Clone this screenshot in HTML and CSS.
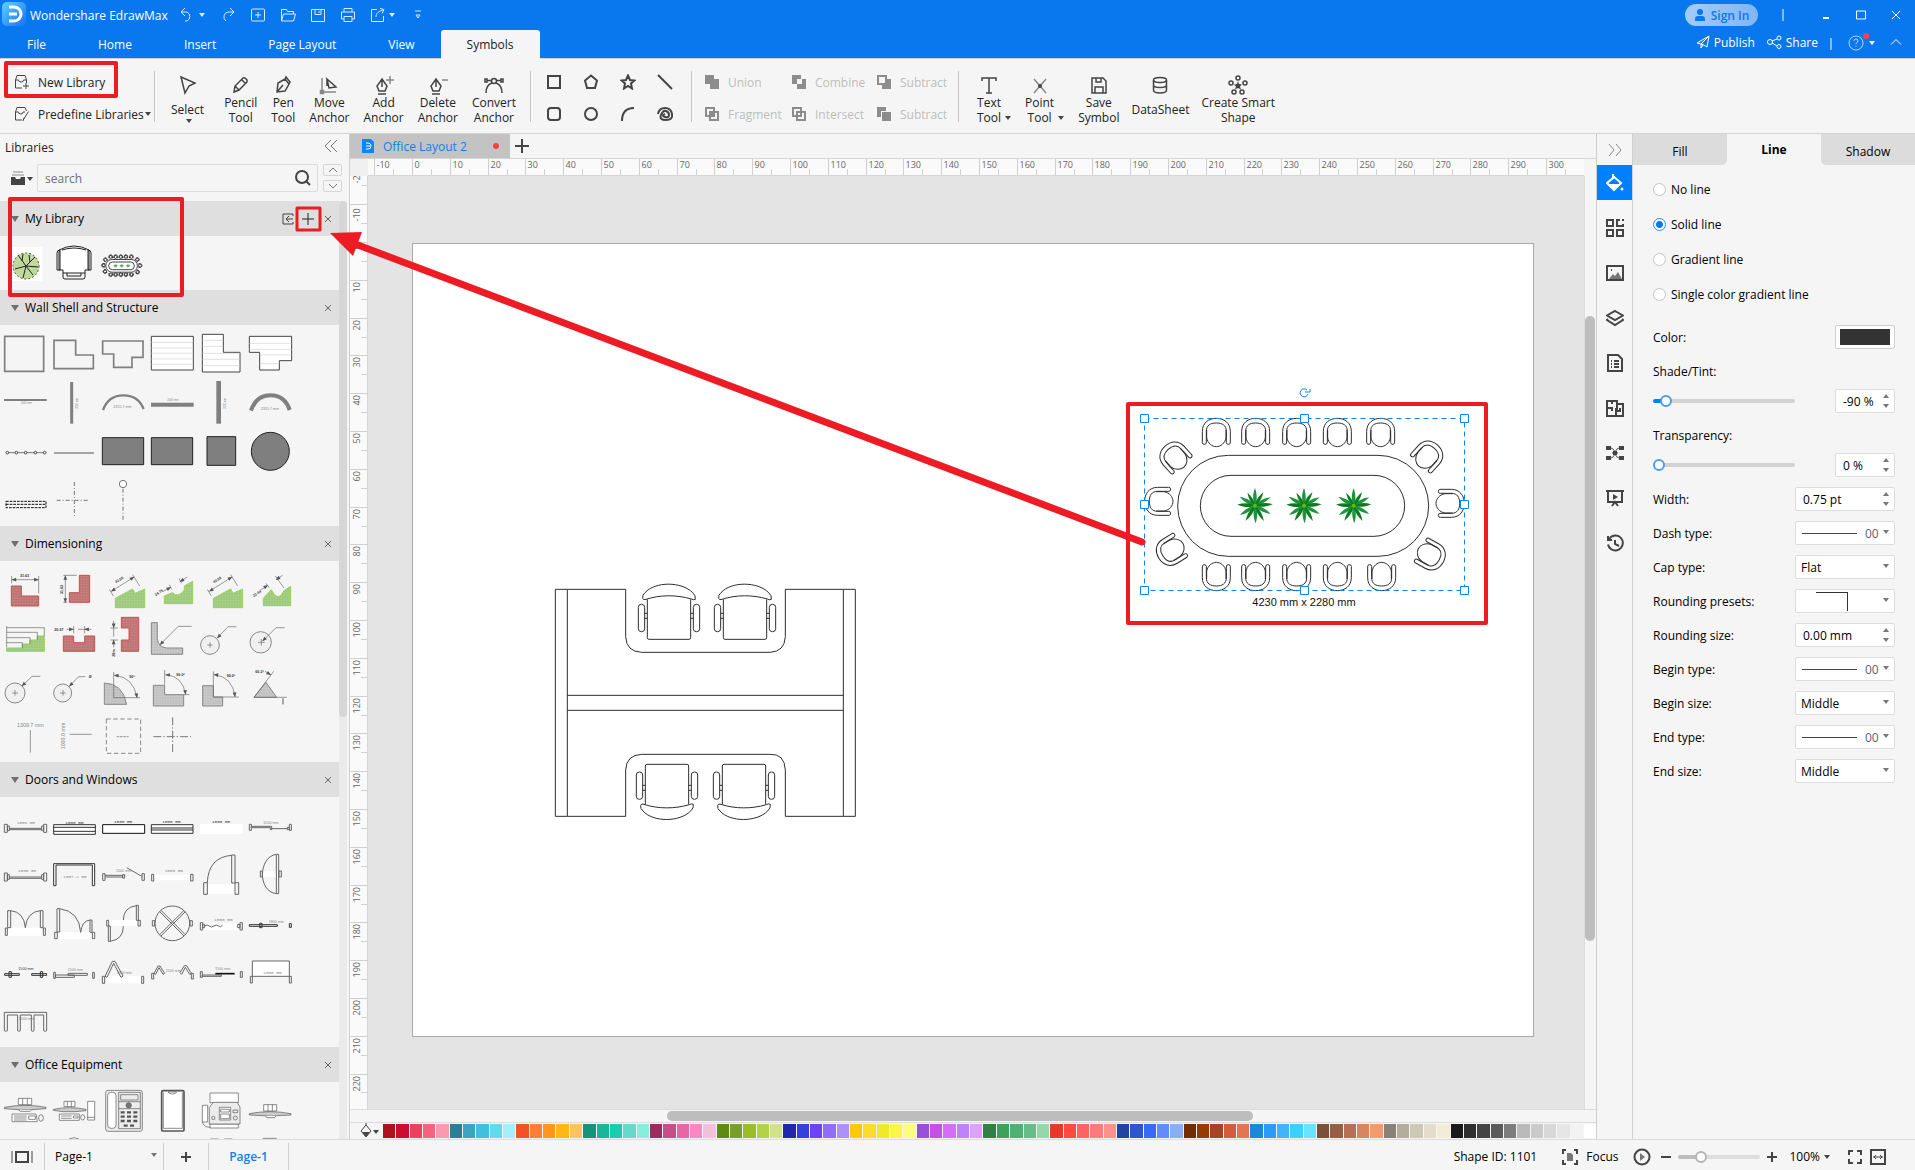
FILE: index.html
```html
<!DOCTYPE html>
<html lang="en">
<head>
  <meta charset="UTF-8" />
  <meta name="viewport" content="width=device-width, initial-scale=1.0"/>
  <title>Wondershare EdrawMax</title>
  <link rel="stylesheet" href="styles.css">
</head>
<body>
  <!-- shared shapes -->
  <svg class="defs" width="0" height="0">
    <defs>
      <pattern id="red" width="8" height="8" patternUnits="userSpaceOnUse"><rect width="8" height="8" fill="#e29595"/><path d="M0 0L8 8M8 0L0 8" stroke="#c96464" stroke-width="1.5"/></pattern>
      <pattern id="green" width="8" height="8" patternUnits="userSpaceOnUse"><rect width="8" height="8" fill="#bfe99b"/><path d="M0 0L8 8M8 0L0 8" stroke="#a0dc70" stroke-width="1.5"/></pattern>
      <pattern id="grey" width="8" height="8" patternUnits="userSpaceOnUse"><rect width="8" height="8" fill="#e2e2e2"/><path d="M0 0L8 8M8 0L0 8" stroke="#cecece" stroke-width="1.5"/></pattern>
      <linearGradient id="logo" x1="0" y1="0" x2="1" y2="1"><stop offset="0" stop-color="#5fd0ff"/><stop offset="1" stop-color="#1470ff"/></linearGradient>
      <marker id="arr" viewBox="0 0 10 10" refX="9" refY="5" markerWidth="18" markerHeight="14" markerUnits="userSpaceOnUse" orient="auto-start-reverse"><path d="M0 1L10 5L0 9z" fill="#555" stroke="none"/></marker>
      <g id="chair">
        <path d="M-42 30V-4C-42 -30 -22 -43 0 -43S42 -30 42 -4V28a6 6 0 0 1-12 2V-4C30 -22 18 -29 0 -29S-30 -22 -30 -4V28a6 6 0 0 1-12 2z"/>
        <path d="M-29 -8V14C-27 32 -12 42 0 42S27 32 29 14V-8"/>
      </g>
      <path id="leaf" d="M0 0C-7 -14 -8 -32 0 -53C7 -32 7 -14 0 0z"/>
      <g id="plant">
        <g fill="#1d9440">
          <use href="#leaf"/><use href="#leaf" transform="rotate(62)"/><use href="#leaf" transform="rotate(118)"/><use href="#leaf" transform="rotate(178)"/><use href="#leaf" transform="rotate(238)"/><use href="#leaf" transform="rotate(300)"/>
        </g>
        <g fill="#0a7d1c">
          <use href="#leaf" transform="rotate(32) scale(.9)"/><use href="#leaf" transform="rotate(85)"/><use href="#leaf" transform="rotate(150)"/><use href="#leaf" transform="rotate(212)"/><use href="#leaf" transform="rotate(274)"/><use href="#leaf" transform="rotate(330) scale(.85)"/>
        </g>
        <circle r="6" fill="#6bb316"/>
      </g>
      <g id="deskchair">
        <path d="M338 115Q336 105 345 98C375 64 455 64 488 98Q498 107 496 118Q490 121 484 117C440 104 390 104 348 118Q339 121 338 115z"/>
        <path d="M352 118V233Q352 238 357 238H477Q482 238 482 233V118"/>
        <rect x="325" y="133" width="19" height="82" rx="9"/><rect x="490" y="133" width="19" height="82" rx="9"/>
        <path d="M344 160H352M344 175H352M482 160H490M482 175H490"/>
      </g>
      <g id="meeting">
        <rect x="233" y="226" width="753" height="303" rx="152"/>
        <rect x="301" y="286" width="613" height="183" rx="92"/>
        <use href="#chair" transform="translate(349 158)"/><use href="#chair" transform="translate(467 158)"/><use href="#chair" transform="translate(590 158)"/><use href="#chair" transform="translate(712 158)"/><use href="#chair" transform="translate(842 158)"/>
        <use href="#chair" transform="translate(349 589) rotate(180)"/><use href="#chair" transform="translate(467 589) rotate(180)"/><use href="#chair" transform="translate(590 589) rotate(180)"/><use href="#chair" transform="translate(712 589) rotate(180)"/><use href="#chair" transform="translate(845 589) rotate(180)"/>
        <use href="#chair" transform="translate(177 364) rotate(-90)"/><use href="#chair" transform="translate(1050 370) rotate(90)"/>
        <use href="#chair" transform="translate(224 230) rotate(-42)"/><use href="#chair" transform="translate(984 227) rotate(42)"/>
        <use href="#chair" transform="translate(213 512) rotate(-122)"/><use href="#chair" transform="translate(992 526) rotate(119)"/>
        <g class="plants"><use href="#plant" x="465" y="377"/><use href="#plant" x="612" y="377"/><use href="#plant" x="761" y="377"/></g>
      </g>
      <g id="jambs"><path d="M13 163h9v24h-9zM131 163h9v24h-9zM22 168h6v14h-6zM125 168h6v14h-6zM28 175H125M28 179H125"/></g>
      <path id="down" d="M0 0H6L3 4z"/>
    </defs>
  </svg>

  <div class="app">
    <header class="top">
      <div class="titlebar">
        <svg class="logo" viewBox="0 0 24 24"><rect width="24" height="24" rx="5" fill="url(#logo)"/><path d="M7 5h5a7 7 0 0 1 0 14H7M7 12h8" fill="none" stroke="#fff" stroke-width="3"/></svg>
        <span class="appname">Wondershare EdrawMax</span>
        <nav class="quick">
          <button class="q wide" aria-label="Undo"><svg width="26" height="16" viewBox="0 0 26 16"><path d="M5 1L1 5l4 4M1 5h6a5 5 0 0 1 0 9H5"/><use href="#down" x="19" y="6" class="solid"/></svg></button>
          <button class="q" aria-label="Redo"><svg width="16" height="16" viewBox="0 0 16 16"><path d="M10 1l4 4-4 4M14 5H8a5 5 0 0 0-2 9"/></svg></button>
          <button class="q" aria-label="New"><svg width="16" height="16" viewBox="0 0 16 16"><rect x="1.500" y="2" width="13" height="12" rx="1"/><path d="M8 5v6M5 8h6"/></svg></button>
          <button class="q" aria-label="Open"><svg width="16" height="16" viewBox="0 0 16 16"><path d="M1.500 14V2.500h5l1 2h6V7M1.500 14l2-7h12l-2 7z"/></svg></button>
          <button class="q" aria-label="Save"><svg width="16" height="16" viewBox="0 0 16 16"><path d="M1.500 2.500h13v12h-13zM5 2.500v5h6v-5M9 4v2"/></svg></button>
          <button class="q" aria-label="Print"><svg width="16" height="16" viewBox="0 0 16 16"><path d="M4 5V1.500h8V5M4 12H1.500V5h13v7H12M4 9.500h8v5H4z"/></svg></button>
          <button class="q wide" aria-label="Export"><svg width="26" height="16" viewBox="0 0 26 16"><path d="M7 2.500H1.500v12h12V9M6 10c0-4 3-6 7-7M10 1.500l4 1-2 4"/><use href="#down" x="19" y="6" class="solid"/></svg></button>
          <button class="q" aria-label="More"><svg width="16" height="16" viewBox="0 0 16 16"><path d="M5 4h6M6 8l2 3 2-3z"/></svg></button>
        </nav>
        <div class="window">
          <button class="signin"><svg width="12" height="14" viewBox="0 0 12 14"><circle cx="6" cy="4" r="3"/><path d="M1 13V11q0-3 3-3h4q3 0 3 3v2z"/></svg>Sign In</button>
          <i class="vbar"></i>
          <button class="win" aria-label="Minimize"><svg width="10" height="12" viewBox="0 0 10 12"><path d="M2 9h6" stroke-width="2"/></svg></button>
          <button class="win" aria-label="Maximize"><svg width="10" height="12" viewBox="0 0 10 12"><path d="M.5 2h9v8h-9z"/></svg></button>
          <button class="win" aria-label="Close"><svg width="10" height="12" viewBox="0 0 10 12"><path d="M1 2l8 8M9 2L1 10"/></svg></button>
        </div>
      </div>
      <div class="menubar">
        <nav class="tabs">
          <a href="#">File</a><a href="#">Home</a><a href="#">Insert</a><a href="#">Page Layout</a><a href="#">View</a><a href="#" class="on">Symbols</a>
        </nav>
        <div class="links">
          <a href="#"><svg width="14" height="14" viewBox="0 0 14 14"><path d="M1 8L13 1L11 12L7 9.500zM13 1L5 9V13L7 10"/></svg>Publish</a>
          <a href="#"><svg width="15" height="14" viewBox="0 0 15 14"><circle cx="3" cy="7" r="2.500"/><circle cx="12" cy="3" r="2"/><circle cx="12" cy="11.500" r="2"/><path d="M5 6l5-2M5 8l5 3"/></svg>Share</a>
          <i class="vbar low"></i>
          <button class="help" aria-label="Help"><svg width="30" height="20" viewBox="0 0 30 20"><circle cx="8" cy="11" r="7" opacity=".7"/><path d="M6 9q0-2 2-2t2 2q0 1-2 2.500v1M8 14v1" opacity=".7"/><use href="#down" x="21" y="9" class="solid"/><circle cx="18" cy="4" r="3" class="dot"/></svg></button>
          <button class="fold" aria-label="Collapse ribbon"><svg width="12" height="8" viewBox="0 0 12 8"><path d="M1 6.500l5-5 5 5"/></svg></button>
        </div>
      </div>
    </header>

    <div class="ribbon">
      <div class="libs">
        <button><svg width="16" height="16" viewBox="0 0 16 16"><path d="M8 14H1.500V6L3 1.500h8L12.500 6v3M1.500 6h3q0 2 2.500 2t2.500-2h3M12 9v6M9 12h6"/></svg>New Library</button>
        <button><svg width="16" height="16" viewBox="0 0 16 16"><path d="M8 14H1.500V6L3 1.500h8L12.500 5M1.500 6h3q0 2 2.500 2 2 0 2-2h2M9.500 13.500l5-8M9 15l1-3"/></svg>Predefine Libraries<svg class="car" width="6" height="4"><use href="#down"/></svg></button>
      </div>
      <div class="tools">
        <button class="one sel"><svg viewBox="0 0 20 20"><path d="M3 2l14 6-6 3-4 7z"/></svg>Select<svg class="car" width="6" height="4"><use href="#down"/></svg></button>
        <button><svg viewBox="0 0 20 20"><path d="M3 17l1-6 8-8q2-1 4 2v2l-8 8zM4 11l4 4M11 5l4 4"/></svg>Pencil<br>Tool</button>
        <button><svg viewBox="0 0 20 20"><path d="M4 17l1-9 7-4 4 5-4 7zM4 17l6-7M12 4l1-2 4 5-1 2"/></svg>Pen<br>Tool</button>
        <button><svg viewBox="0 0 20 20"><path d="M8 4l9 8-7 1zM8 4v7"/><path class="lt" d="M3 3v14h14M1.500 15.500h3v3h-3z"/></svg>Move<br>Anchor</button>
        <button><svg viewBox="0 0 20 20"><path d="M8 4l5 7-2 5H5l-2-5zM8 4v8M4 19h8"/><path class="lt" d="M16 1v8M12 5h8"/></svg>Add<br>Anchor</button>
        <button><svg viewBox="0 0 20 20"><path d="M8 4l5 7-2 5H5l-2-5zM8 4v8M4 19h8"/><path class="lt" d="M14 5h6"/></svg>Delete<br>Anchor</button>
        <button><svg viewBox="0 0 20 20"><path d="M1 4h2v3H1zM17 4h2v3h-2zM3 5.500h4M13 5.500h4M2 18q0-8 6-10M18 18q0-8-6-10"/><circle cx="10" cy="6" r="2.500"/></svg>Convert<br>Anchor</button>
      </div>
      <div class="shapes">
        <button aria-label="Rectangle"><svg viewBox="0 0 16 16"><path d="M2 2h12v12H2z"/></svg></button>
        <button aria-label="Pentagon"><svg viewBox="0 0 16 16"><path d="M8 1.500l6 5L12 14H4L2 6.500z"/></svg></button>
        <button aria-label="Star"><svg viewBox="0 0 16 16"><path d="M8 1.500l2 4.500 4.500.5-3.500 3 1 5-4-2.500-4 2.500 1-5-3.500-3L6 6z"/></svg></button>
        <button aria-label="Line"><svg viewBox="0 0 16 16"><path d="M1 1l14 14"/></svg></button>
        <button aria-label="Rounded rectangle"><svg viewBox="0 0 16 16"><rect x="2" y="2" width="12" height="12" rx="3"/></svg></button>
        <button aria-label="Ellipse"><svg viewBox="0 0 16 16"><circle cx="8" cy="8" r="6"/></svg></button>
        <button aria-label="Arc"><svg viewBox="0 0 16 16"><path d="M2 15Q2 2 14 2"/></svg></button>
        <button aria-label="Spiral"><svg viewBox="0 0 16 16"><path d="M1 8Q2 2 8 2t7 6-6 6-5-5 5-4 3 4-4 2 0-3"/></svg></button>
      </div>
      <div class="bool">
        <button disabled><svg viewBox="0 0 14 14"><path class="f" d="M0 0h9v4h5v10H5V9H0z"/></svg>Union</button>
        <button disabled><svg viewBox="0 0 14 14"><path class="f" fill-rule="evenodd" d="M0 0h9v4h5v10H5V9H0zM5 4v5h5V4z"/></svg>Combine</button>
        <button disabled><svg viewBox="0 0 14 14"><path d="M1 1h8v8H1z"/><path class="f" d="M10 4h4v10H5v-4h5z"/></svg>Subtract</button>
        <button disabled><svg viewBox="0 0 14 14"><path d="M1 1h8v8H1zM5 5h8v8H5zM5 9l4-4"/></svg>Fragment</button>
        <button disabled><svg viewBox="0 0 14 14"><path d="M1 1h8v8H1zM5 5h8v8H5z"/></svg>Intersect</button>
        <button disabled><svg viewBox="0 0 14 14"><path class="f" d="M0 0h9v4H4v6H0z"/><path class="f" d="M5 5h9v9H5z"/></svg>Subtract</button>
      </div>
      <div class="tools last">
        <button class="drop"><svg viewBox="0 0 20 20"><path d="M3 6V3h14v3M10 3v15M7 18h6"/></svg>Text<br>Tool<svg class="car" width="6" height="4"><use href="#down"/></svg></button>
        <button class="drop"><svg viewBox="0 0 20 20"><path class="lt" d="M4 4l12 14M16 4L4 18"/><circle class="f" cx="10" cy="11" r="2"/></svg>Point<br>Tool<svg class="car" width="6" height="4"><use href="#down"/></svg></button>
        <button><svg viewBox="0 0 20 20"><path d="M3 3h11l3 3v12H3zM7 3v4h5V3M6 18v-6h8v6"/></svg>Save<br>Symbol</button>
        <button class="one"><svg viewBox="0 0 20 20"><ellipse cx="10" cy="5" rx="6.500" ry="2.500"/><path d="M3.500 5v10q0 3 6.500 3t6.500-3V5M3.500 10q0 2.500 6.500 2.500t6.500-2.500"/></svg>DataSheet</button>
        <button><svg viewBox="0 0 20 20"><circle cx="10" cy="3" r="2"/><circle cx="3" cy="8" r="2"/><circle cx="17" cy="8" r="2"/><circle cx="6" cy="17" r="2"/><circle cx="14" cy="17" r="2"/><path class="f" d="M10 6l1 3 3 .5-2 2 1 3-3-1.500-3 1.500 1-3-2-2 3-.5z"/></svg>Create Smart<br>Shape</button>
      </div>
    </div>

    <main class="work">
      <!-- left: libraries -->
      <aside class="left">
        <div class="lefthead"><span>Libraries</span><button aria-label="Collapse"><svg width="14" height="14" viewBox="0 0 14 14"><path d="M7 1L1 7l6 6M13 1L7 7l6 6"/></svg></button></div>
        <div class="searchrow">
          <button class="libmenu" aria-label="Library menu"><svg width="22" height="14" viewBox="0 0 22 14"><path class="lt" d="M2 1h10M1 4h12"/><path class="f" d="M0 6h4l1 2h4l1-2h4v8H0z"/><use href="#down" x="16" y="6"/></svg></button>
          <div class="searchbox"><input type="text" placeholder="search" aria-label="Search symbols"><svg width="18" height="18" viewBox="0 0 18 18"><circle cx="8" cy="8" r="6"/><path d="M12 12l4 4"/></svg></div>
          <div class="updown">
            <button aria-label="Up"><svg width="10" height="6" viewBox="0 0 10 6"><path d="M1 5l4-4 4 4"/></svg></button>
            <button aria-label="Down"><svg width="10" height="6" viewBox="0 0 10 6"><path d="M1 1l4 4 4-4"/></svg></button>
          </div>
        </div>
        <div class="scroller">
          <div class="list">
            <section>
              <h2><i></i>My Library
                <button class="imp" aria-label="Import"><svg width="12" height="12" viewBox="0 0 12 12"><path d="M11 3V1H1v10h10V9M11 6H4M7 3L4 6l3 3"/></svg></button>
                <button class="plus" aria-label="Add"><svg width="12" height="12" viewBox="0 0 12 12"><path d="M6 0v12M0 6h12"/></svg></button>
                <button class="x" aria-label="Close"><svg width="8" height="8" viewBox="0 0 8 8"><path d="M1 1l6 6M7 1L1 7"/></svg></button></h2>
              <div class="grid">
                <svg viewBox="0 0 49 49"><path d="M12 6h30v34H12z" fill="#fff" stroke="none"/><circle cx="26" cy="25" r="13" fill="#c0da9c" stroke="#4d5a3a" stroke-dasharray="2 2"/><path d="M26 25L18 14M26 25l9-9M26 25l12 1M26 25l-3 12M26 25l-11 3M26 25l7 9M22 20l1-7M30 21l-1-7" stroke="#222"/></svg>
                <svg viewBox="0 0 49 49"><g stroke="#222"><path fill="#fff" d="M10 9Q25 1 40 9V29H36V32H14V29H10z"/><path d="M8 12q0-3 3-3v20H8zM42 12q0-3-3-3v20h3zM13 9Q25 5 37 9M14 32v4q0 2 2 2h18q2 0 2-2v-4M18 32v3h14v-3"/></g></svg>
                <svg viewBox="0 0 49 49"><use href="#meeting" class="mini" transform="translate(-2 9) scale(.042)"/></svg>
              </div>
            </section>

            <section>
              <h2><i></i>Wall Shell and Structure<button class="x" aria-label="Close"><svg width="8" height="8" viewBox="0 0 8 8"><path d="M1 1l6 6M7 1L1 7"/></svg></button></h2>
              <div class="grid c3">
                <svg viewBox="0 120 147 147"><path class="w" stroke-width="5" d="M14 139H131V244H14z"/></svg>
                <svg viewBox="147 120 147 147"><path class="w" stroke-width="5" d="M162 151H227V195H280V236H162z"/></svg>
                <svg viewBox="294 120 147 147"><path class="w" stroke-width="5" d="M308 153H429V202H396V232H341V192H308z"/></svg>
                <svg viewBox="441 120 147 147"><path fill="#fff" d="M454 139H580V240H454z"/><path class="g" d="M454 157H580M454 174H580M454 190H580M454 207H580M454 223H580"/></svg>
                <svg viewBox="588 120 147 147"><path fill="#fff" d="M607 133H670V187H720V246H607z"/><path class="g" d="M607 151H670M607 169H670M607 190H720M607 208H720M607 227H720"/></svg>
                <svg viewBox="735 120 147 147"><path fill="#fff" d="M748 139H875V212H838V240H779V187H748z"/><path class="g" d="M748 160H875M748 178H875M779 195H875M779 221H838"/></svg>

                <svg viewBox="0 267 147 147"><path stroke="#7f7f7f" stroke-width="6" d="M12 330H140"/><text class="t" x="62" y="343">2000 mm</text></svg>
                <svg viewBox="147 267 147 147"><path stroke="#7f7f7f" stroke-width="9" d="M215 276V401"/><text class="t" transform="translate(233 357) rotate(-90)">2000 mm</text></svg>
                <svg viewBox="294 267 147 147"><path stroke="#7f7f7f" stroke-width="7" d="M309 360Q325 316 370 316T431 357"/><text class="s" x="340" y="355">2355.7 mm</text></svg>
                <svg viewBox="441 267 147 147"><path stroke="#7f7f7f" stroke-width="12" d="M453 344H581"/><text class="t" x="502" y="334">2000 mm</text></svg>
                <svg viewBox="588 267 147 147"><path stroke="#7f7f7f" stroke-width="14" d="M656 273V401"/><text class="t" transform="translate(677 357) rotate(-90)">2000 mm</text></svg>
                <svg viewBox="735 267 147 147"><path stroke="#7f7f7f" stroke-width="12" d="M753 362Q768 316 811 316T869 360"/><text class="s" x="782" y="359">2355.7 mm</text></svg>

                <svg viewBox="0 414 147 147"><path d="M22 488H134" stroke="#777"/><g fill="#fff"><circle cx="22" cy="488" r="4"/><circle cx="49" cy="488" r="4"/><circle cx="77" cy="488" r="4"/><circle cx="106" cy="488" r="4"/><circle cx="134" cy="488" r="4"/></g></svg>
                <svg viewBox="147 414 147 147"><path stroke="#888" stroke-width="5" d="M162 489H282"/></svg>
                <svg viewBox="294 414 147 147"><path fill="#7f7f7f" stroke="#222" d="M307 443H431V524H307z"/></svg>
                <svg viewBox="441 414 147 147"><path fill="#7f7f7f" stroke="#222" d="M454 443H578V524H454z"/></svg>
                <svg viewBox="588 414 147 147"><path fill="#7f7f7f" stroke="#222" d="M621 440H707V526H621z"/></svg>
                <svg viewBox="735 414 147 147"><circle fill="#7f7f7f" stroke="#222" cx="811" cy="484" r="57"/></svg>

                <svg viewBox="0 561 147 147"><path stroke="#111" stroke-dasharray="8 3" d="M18 634H138V653H18zM18 643H138"/></svg>
                <svg viewBox="147 561 147 147"><path stroke="#777" stroke-dasharray="12 6 3 6" d="M223 576V683M170 631H268"/></svg>
                <svg viewBox="294 561 147 147"><circle fill="#fff" stroke="#777" cx="369" cy="582" r="11"/><path stroke="#777" stroke-dasharray="12 6 3 6" d="M369 596V690"/></svg>
              </div>
            </section>

            <section>
              <h2><i></i>Dimensioning<button class="x" aria-label="Close"><svg width="8" height="8" viewBox="0 0 8 8"><path d="M1 1l6 6M7 1L1 7"/></svg></button></h2>
              <div class="grid c3">
                <svg viewBox="0 108 147 147"><path class="r" d="M34 168H64V198H116V228H34z"/><path class="m" marker-start="url(#arr)" marker-end="url(#arr)" d="M36 149H115"/><path class="m" d="M35 138V160M116 138V190"/><text class="d" x="60" y="141">31.63</text></svg>
                <svg viewBox="147 108 147 147"><path class="r" d="M238 136H269V217H208V188H238z"/><path class="m" marker-start="url(#arr)" marker-end="url(#arr)" d="M196 137V217"/><path class="m" d="M190 136H230M190 217H202"/><text class="d" transform="translate(188 192) rotate(-90)">31.63</text></svg>
                <svg viewBox="294 108 147 147"><path class="n" d="M346 205L398 177L405 190L434 177V233H346z"/><path class="m" marker-start="url(#arr)" marker-end="url(#arr)" d="M334 184L402 141"/><path class="m" d="M328 178L340 198M398 134L419 168"/><text class="d" transform="translate(348 160) rotate(-32)">43.59</text></svg>
                <svg viewBox="441 108 147 147"><path class="n" d="M493 198L517 188Q535 205 553 180V168L578 154V221H493z"/><path class="m" marker-end="url(#arr)" d="M490 184L512 172"/><path class="m" marker-end="url(#arr)" d="M562 141L540 155"/><path class="m" d="M508 164L515 178M537 146L545 160"/><text class="d" transform="translate(467 198) rotate(-32)">24.79</text></svg>
                <svg viewBox="588 108 147 147"><path class="n" d="M640 205L692 177L699 190L728 177V233H640z"/><path class="m" marker-start="url(#arr)" marker-end="url(#arr)" d="M628 184L696 141"/><path class="m" d="M622 178L634 198M692 134L713 168"/><text class="d" transform="translate(642 160) rotate(-32)">43.59</text></svg>
                <svg viewBox="735 108 147 147"><path class="n" d="M790 205L814 179Q834 220 852 182L872 169V227H790z"/><path class="m" marker-end="url(#arr)" d="M780 181L803 166"/><path class="m" marker-end="url(#arr)" d="M848 136L828 149"/><path class="m" d="M798 160L808 174M826 138L852 174"/><text class="d" transform="translate(761 201) rotate(-32)">22.04</text></svg>

                <svg viewBox="0 255 147 147"><path class="n" d="M20 354H67V342H90V330H112V318H133V364H20z"/><path class="m" d="M20 288V352M20 293H133V318M20 307H112V330M20 323H90V342M20 338H67V354"/></svg>
                <svg viewBox="147 255 147 147"><path class="r" d="M190 318H221V338H254V318H284V364H190z"/><path class="m" marker-end="url(#arr)" d="M200 298H220"/><path class="m" marker-end="url(#arr)" d="M274 298H254"/><path class="m" d="M221 288V310M254 288V310M234 298H254"/><text class="d" x="163" y="302">20.67</text></svg>
                <svg viewBox="294 255 147 147"><path class="r" d="M364 262H416V364H364V330H387V294H364z"/><path class="m" marker-end="url(#arr)" d="M341 272V293"/><path class="m" marker-end="url(#arr)" d="M341 352V330"/><path class="m" d="M331 294H354M331 330H354M341 294V320"/><text class="d" transform="translate(345 380) rotate(-90)">20m</text></svg>
                <svg viewBox="441 255 147 147"><path class="y" d="M454 278H472V325Q474 352 500 354H548V373H454z"/><path class="m" marker-start="url(#arr)" d="M480 344L535 289H575"/></svg>
                <svg viewBox="588 255 147 147"><circle class="y" cx="630" cy="345" r="28"/><path class="m" d="M622 345H638M630 337V353"/><path class="m" marker-start="url(#arr)" d="M652 324L684 290H709"/></svg>
                <svg viewBox="735 255 147 147"><circle class="y" cx="782" cy="337" r="32"/><path class="m" d="M774 337H794M784 327V347"/><path class="m" marker-start="url(#arr)" d="M788 333L828 293H854"/></svg>

                <svg viewBox="0 402 147 147"><circle class="y" cx="45" cy="489" r="30"/><path class="m" d="M37 489H54M45 480V497"/><path class="m" marker-start="url(#arr)" d="M66 468L96 439H121"/></svg>
                <svg viewBox="147 402 147 147"><circle class="y" cx="188" cy="489" r="27"/><path class="m" d="M180 489H197M189 480V497"/><path class="m" marker-start="url(#arr)" d="M208 469L236 440H256"/><text class="d" x="266" y="445">Ø</text></svg>
                <svg viewBox="294 402 147 147"><path class="y" d="M313 459Q368 460 380 523H313z"/><path class="m" d="M341 426V503H420"/><path class="m" marker-start="url(#arr)" marker-end="url(#arr)" d="M343 436Q400 440 411 503"/><text class="d" x="388" y="444">90°</text></svg>
                <svg viewBox="441 402 147 147"><path class="y" d="M460 466H494V494H551V528H460z"/><path class="m" d="M494 420V464M551 494H568"/><path class="m" marker-start="url(#arr)" marker-end="url(#arr)" d="M497 434Q548 438 557 493"/><text class="d" x="529" y="438">90.0°</text></svg>
                <svg viewBox="588 402 147 147"><path class="y" d="M608 467H640V501H668V528H608z"/><path class="m" d="M640 424V501H716"/><path class="m" marker-start="url(#arr)" marker-end="url(#arr)" d="M642 434Q698 440 705 500"/><text class="d" x="680" y="442">90.0°</text></svg>
                <svg viewBox="735 402 147 147"><path class="y" d="M762 502L798 457L830 502z"/><path class="m" d="M762 502L821 424M762 502H861M849 523V506"/><path class="m" marker-end="url(#arr)" d="M849 524V504M795 424L812 434"/><text class="d" x="766" y="429">60.2°</text></svg>

                <svg viewBox="0 549 147 147"><path class="m" d="M91 600V668"/><text class="l" x="51" y="591">1309.7 mm</text></svg>
                <svg viewBox="147 549 147 147"><path class="m" d="M209 613H275"/><text class="l" transform="translate(194 658) rotate(-90)">1000.0 mm</text></svg>
                <svg viewBox="294 549 147 147"><path stroke="#888" stroke-dasharray="13 8" d="M319 567H422V670H319z"/><path class="m" stroke-dasharray="8 2" d="M350 620H386"/></svg>
                <svg viewBox="441 549 147 147"><path stroke="#777" stroke-dasharray="24 6 4 6" d="M518 562V671M460 620H573"/></svg>
              </div>
            </section>

            <section>
              <h2><i></i>Doors and Windows<button class="x" aria-label="Close"><svg width="8" height="8" viewBox="0 0 8 8"><path d="M1 1l6 6M7 1L1 7"/></svg></button></h2>
              <div class="grid c3 doors">
                <svg viewBox="0 96 147 147"><use href="#jambs"/><text x="50" y="161">1500 mm</text></svg>
                <svg viewBox="147 96 147 147"><path fill="#fff" stroke="#333" d="M161 164H286V193H161zM161 172H286M161 184H286"/><text class="b" x="196" y="161">1500 mm</text></svg>
                <svg viewBox="294 96 147 147"><path fill="#fff" stroke="#111" d="M308 164H434V190H308z"/><text class="b" x="342" y="158">1500 mm</text></svg>
                <svg viewBox="441 96 147 147"><path fill="#fff" stroke="#333" d="M454 164H579V190H454zM454 174H579M454 180H579"/><text class="b" x="487" y="158">1500 mm</text></svg>
                <svg viewBox="588 96 147 147"><path fill="#fff" stroke="none" d="M600 162H728V192H600z"/><text class="b" x="636" y="158">1500 mm</text></svg>
                <svg viewBox="735 96 147 147"><path d="M748 163h6v18h-6zM868 163h6v18h-6zM754 169H815V176H862M754 173H811V179H815V173M862 172h6v7h-6z"/><text class="s" x="790" y="161">1500 mm</text></svg>

                <svg viewBox="0 243 147 147"><use href="#jambs" y="146"/><text x="54" y="307">1500 mm</text></svg>
                <svg viewBox="147 243 147 147"><path fill="#fff" stroke="#333" d="M161 281H284V347H277V285H168V347H161z"/><text x="190" y="323">1587.2 mm</text></svg>
                <svg viewBox="294 243 147 147"><path d="M308 311h7v20h-7zM426 311h7v20h-7zM315 316H368V321H315M368 314h6v10h-6zM380 293L424 318H426"/><text class="s" x="348" y="307">1500 mm</text></svg>
                <svg viewBox="441 243 147 147"><path fill="#fff" stroke="none" d="M460 314H574V331H460z"/><path d="M455 313h6v20h-6zM572 313h7v20h-7z"/><text x="494" y="306">1500 mm</text></svg>
                <svg viewBox="588 243 147 147"><path fill="#fff" stroke="none" d="M621 343H706V372H621z"/><path d="M611 338h11v35h-11zM705 338h11v35h-11zM695 255h10v84h-10zM695 256Q625 262 622 338"/></svg>
                <svg viewBox="735 243 147 147"><path fill="#fff" stroke="none" d="M787 303H838V321H787z"/><path d="M829 253h7v118h-7zM829 253C775 260 772 365 829 371M781 303h6v18h-6zM837 303h7v18h-7z"/></svg>

                <svg viewBox="0 390 147 147"><path fill="#fff" stroke="none" d="M22 473H130V497H22z"/><path d="M16 474h6v22h-6zM130 474h6v22h-6zM23 422h9v51h-9zM121 422h8v51h-8zM32 422Q72 426 76 473Q80 426 121 422"/></svg>
                <svg viewBox="147 390 147 147"><path fill="#fff" stroke="none" d="M172 487H277V508H172z"/><path d="M164 487h8v19h-8zM277 487h7v19h-7zM171 416h8v70h-8zM179 416Q238 424 242 487Q246 452 270 450V487H276V450H270"/></svg>
                <svg viewBox="294 390 147 147"><path fill="#fff" stroke="none" d="M327 450H414V468H327z"/><path d="M320 451h6v17h-6zM414 451h7v17h-7zM409 406h6v45h-6zM325 468h6v46h-6zM409 407Q370 412 370 450M331 514Q370 508 370 469"/></svg>
                <svg viewBox="441 390 147 147"><circle cx="517" cy="460" r="52"/><path d="M457 452h7v16h-7zM570 452h7v16h-7zM479 425L552 498M483 421L556 494M552 421L479 494M556 425L483 498"/></svg>
                <svg viewBox="588 390 147 147"><path fill="#fff" stroke="none" d="M612 460H715V480H612z"/><path d="M601 458h7v22h-7zM720 458h7v22h-7zM608 463h6v10h-6zM713 463h7v10h-7zM614 468q8-6 14 0t14 0 14 0 12-3"/><text x="643" y="454">1500 mm</text></svg>
                <svg viewBox="735 390 147 147"><path stroke="#333" d="M748 464H832V469H748zM779 460h7v13h-7zM868 461h6v11h-6z"/><text class="s" x="806" y="459">1800 mm</text></svg>

                <svg viewBox="0 537 147 147"><path stroke="#333" d="M14 611H58V616H14zM95 611H140V616H95zM27 605h7v17h-7zM121 605h7v17h-7z"/><text class="b s" x="55" y="601">1500 mm</text></svg>
                <svg viewBox="147 537 147 147"><path d="M161 607h5v18h-5zM278 607h5v18h-5zM204 610H262V616H204zM166 615H223V622H166z"/><text class="s" x="203" y="604">1500 mm</text></svg>
                <svg viewBox="294 537 147 147"><path fill="#fff" stroke="none" d="M314 619H425V640H314z"/><text class="s" x="350" y="613">1500 mm</text><path d="M307 619h7v21h-7zM425 619h6v21h-6zM315 619L337 574L345 574L369 618L363 622L341 580L321 622z"/></svg>
                <svg viewBox="441 537 147 147"><path d="M455 610h6v17h-6zM574 610h6v17h-6zM462 610L474 588L480 588L494 610L489 613L477 593L467 613zM540 608L553 587L560 587L574 610L569 613L556 592L545 613z"/><text class="s" x="497" y="606">1500 mm</text></svg>
                <svg viewBox="588 537 147 147"><path d="M601 605h6v17h-6zM721 605h6v17h-6zM607 615H664V619H607z"/><path stroke="#111" stroke-width="5" d="M646 611H704"/><text class="s" x="645" y="601">1500 mm</text></svg>
                <svg viewBox="735 537 147 147"><path fill="#fff" d="M757 573H868V619H757z"/><path d="M751 619h6v20h-6zM868 619h6v20h-6z"/><text x="790" y="612">1500 mm</text></svg>

                <svg viewBox="0 684 147 147"><text class="s" x="56" y="751">1500 mm</text><path d="M13 727H140V782Q136 786 131 782V735H102V782Q98 786 94 782V735H61V782Q57 786 53 782V735H22V782Q17 786 13 782z"/></svg>
              </div>
            </section>

            <section>
              <h2><i></i>Office Equipment<button class="x" aria-label="Close"><svg width="8" height="8" viewBox="0 0 8 8"><path d="M1 1l6 6M7 1L1 7"/></svg></button></h2>
              <div class="grid c3 equip">
                <svg viewBox="0 951 147 147"><path fill="#ccc" d="M13 1012Q75 1000 138 1012V1016L95 1019H55L13 1016z"/><path fill="#fff" d="M55 985H95V1004H55zM68 985V1004M82 985V1004M55 1019L62 1024H90L95 1019M36 1032H108L112 1055H36z"/><path d="M42 1038H80M42 1044H80M42 1050H80M86 1038h20v10h-20z"/><ellipse cx="123" cy="1044" rx="7" ry="10"/></svg>
                <svg viewBox="147 951 147 147"><path fill="#ccc" d="M160 1018Q208 1008 258 1018V1022L225 1025H190L160 1021z"/><path fill="#fff" d="M192 994H225V1010H192zM202 994V1010M214 994V1010M178 1032H238V1051H178zM263 994h21v56h-21z"/><path d="M183 1038H215M183 1045H215M220 1038h14v6h-14zM263 1042h21"/><ellipse cx="248" cy="1042" rx="6" ry="8"/></svg>
                <svg viewBox="294 951 147 147"><rect fill="#ececec" x="317" y="961" width="110" height="123" rx="7"/><rect fill="#fff" x="323" y="967" width="25" height="108" rx="10"/><path d="M356 967H421V1076H356zM362 974H414V990H362zM356 995H421M356 1016H421"/><circle cx="386" cy="1006" r="8" fill="#777"/><path stroke-width="7" stroke-dasharray="12 7" d="M362 1027H412M362 1040H412M362 1053H412M371 1067H402"/></svg>
                <svg viewBox="441 951 147 147"><rect fill="#fff" stroke-width="5" x="485" y="962" width="67" height="121" rx="4"/><path d="M490 967V1075H547V967M504 966q2 6 13 6t13-6z"/></svg>
                <svg viewBox="588 951 147 147"><path fill="#fff" d="M630 969H715V998H630zM630 1062H715V1074H630z"/><path fill="#ececec" d="M628 1012L640 997H712L720 1012V1062H628z"/><path fill="#fff" d="M607 1006h16v50h-16zM658 1012H692V1050H658z"/><path d="M662 1018h26v8h-26zM662 1032h26v14h-26zM699 1020h14v8h-14zM607 1056q4 16 24 16"/><circle cx="640" cy="1044" r="5"/><circle cx="706" cy="1044" r="6"/></svg>
                <svg viewBox="735 951 147 147"><path fill="#ccc" d="M748 1031Q810 1019 873 1031V1035L830 1037H790L748 1035z"/><path fill="#fff" d="M791 1004H830V1023H791zM804 1004V1023M817 1004V1023M796 1037L800 1043H824L828 1037"/></svg>
                <svg viewBox="0 0 147 147"></svg>
                <svg viewBox="0 0 147 147"><path d="M60 9Q75 1 90 9"/></svg>
                <svg viewBox="0 0 147 147"></svg>
                <svg viewBox="0 0 147 147"></svg>
                <svg viewBox="0 0 147 147"><path d="M43 9h24M85 9h24"/></svg>
                <svg viewBox="0 0 147 147"><path d="M53 7h42"/></svg>
              </div>
            </section>
          </div>
          <div class="vtrack"><i></i></div>
        </div>
      </aside>

      <!-- middle: document -->
      <section class="center">
        <div class="doctabs">
          <a href="#" class="doc"><svg width="12" height="14" viewBox="0 0 12 14"><path d="M0 0h9l3 3v11H0z" fill="#0d85ff"/><path d="M4 4h2a3 3 0 0 1 0 6H4M4 7h4" fill="none" stroke="#fff"/></svg>Office Layout 2<i></i></a>
          <button aria-label="New page"><svg width="14" height="14" viewBox="0 0 14 14"><path d="M7 0v14M0 7h14"/></svg></button>
        </div>
        <div class="stage">
          <div class="corner"></div>
          <svg class="hruler" id="hruler"></svg>
          <div class="gap"></div>
          <svg class="vruler" id="vruler"></svg>
          <div class="canvas">
            <svg class="page" width="1122" height="794" viewBox="0 0 1122 794">
              <!-- desk block -->
              <g class="ink" transform="translate(118 317) scale(.33333)">
                <path d="M76 88H112V769H76zM940 88H976V769H940zM112 406H940M112 451H940"/>
                <path d="M112 88H287V230Q289 275 335 277H720Q764 275 766 230V88H940M112 769H287V630Q289 585 335 583H720Q764 581 766 630V769H940"/>
                <use href="#deskchair"/><use href="#deskchair" x="228"/>
                <use href="#deskchair" transform="translate(-6 851) scale(1 -1)"/><use href="#deskchair" transform="translate(225 851) scale(1 -1)"/>
              </g>
              <use href="#meeting" class="ink" transform="translate(688 137) scale(.33333)"/>
              <g class="pick">
                <rect x="732.500" y="175.500" width="320" height="172" stroke-dasharray="5 4"/>
                <g fill="#fff">
                  <path d="M728.500 171.500h8v8h-8zM888.500 171.500h8v8h-8zM1048.500 171.500h8v8h-8zM728.500 257.500h8v8h-8zM1048.500 257.500h8v8h-8zM728.500 343.500h8v8h-8zM888.500 343.500h8v8h-8zM1048.500 343.500h8v8h-8z"/>
                </g>
                <path d="M895 147a4 4 0 1 0 1 4M893 149h5v-3"/>
              </g>
              <text class="dims" x="892" y="363">4230 mm x 2280 mm</text>
            </svg>
          </div>
          <div class="vbarscroll"><i></i></div>
        </div>
        <div class="hscroll"><i></i></div>
        <div class="palette">
          <button aria-label="Fill colour"><svg width="20" height="16" viewBox="0 0 20 16"><path d="M6 2l5 6-5 6-5-6zM6 2V0"/><path class="f" d="M2 9h8l-4 5z"/><use href="#down" x="13" y="7"/></svg></button>
          <div class="swatches" id="swatches"></div>
        </div>
      </section>

      <!-- right: icon strip + format pane -->
      <nav class="strip">
        <button class="first" aria-label="Collapse pane"><svg viewBox="0 0 18 18"><path d="M3 3l5 6-5 6M10 3l5 6-5 6"/></svg></button>
        <button class="on" aria-label="Style"><svg viewBox="0 0 18 18"><path d="M7 2l8 7-7 7-7-7 6-5V0"/><path class="f" d="M2 10h12l-6 6z"/><circle class="f" cx="16" cy="15" r="1.500"/></svg></button>
        <button aria-label="Symbols"><svg viewBox="0 0 18 18"><path d="M1 1h6v6H1zM1 11h6v6H1zM11 11h6v6h-6zM17 5v2h-6V1h3M16 1h2"/></svg></button>
        <button aria-label="Picture"><svg viewBox="0 0 18 18"><path d="M1 2h16v14H1z"/><path class="lf" d="M3 15l4-5 2 2 3-4 4 7z"/><path d="M5 6h1"/></svg></button>
        <button aria-label="Layers"><svg viewBox="0 0 18 18"><path d="M9 2l8 4.500L9 11 1 6.500zM2 10l-1 1 8 5 8-5-1-1"/></svg></button>
        <button aria-label="Notes"><svg viewBox="0 0 18 18"><path d="M2 1h10l4 4v12H2zM5 7h1M8 7h5M5 10h1M8 10h5M5 13h1M8 13h5"/></svg></button>
        <button aria-label="Floor plan"><svg viewBox="0 0 18 18"><path d="M1 2h10v3h6v12H1zM6 2v3M1 9h5v3M11 5v5H9M14 9v3h-4v5"/></svg></button>
        <button aria-label="Mind map"><svg viewBox="0 0 18 18"><path d="M4 4q4 0 5 5 1 5 5 5M4 14q4 0 5-5 1-5 5-5M6 9h6" stroke-width="1"/><path class="f" d="M0 2h5v4H0zM0 12h5v4H0zM13 2h5v4h-5zM13 12h5v4h-5zM7 7h4v4H7z"/></svg></button>
        <button aria-label="Presentation"><svg viewBox="0 0 18 18"><path d="M0 2h18M2 2v11h14V2M6 17l3-4 3 4"/><path class="f" d="M7 5l5 3-5 3z"/></svg></button>
        <button aria-label="History"><svg viewBox="0 0 18 18"><path d="M3 5q3-4 7-3.500a7.500 7.500 0 1 1-8 9M2 2v4h4M9 6v4l4 2"/></svg></button>
      </nav>
      <aside class="pane">
        <div class="panetabs"><button class="l">Fill</button><button class="on">Line</button><button class="r">Shadow</button></div>
        <form>
          <label class="radio"><input type="radio" name="line">No line</label>
          <label class="radio"><input type="radio" name="line" checked>Solid line</label>
          <label class="radio"><input type="radio" name="line">Gradient line</label>
          <label class="radio"><input type="radio" name="line">Single color gradient line</label>
          <div class="row first"><label for="color">Color:</label><button type="button" id="color" class="ctl small color"><i></i></button></div>
          <div class="row"><label for="shade">Shade/Tint:</label></div>
          <div class="row slide"><input type="range" id="shade" class="shade" value="5"><span class="ctl small spin"><input type="text" value="-90 %" aria-label="Shade value"></span></div>
          <div class="row"><label for="trans">Transparency:</label></div>
          <div class="row slide"><input type="range" id="trans" value="0"><span class="ctl small spin"><input type="text" value="0 %" aria-label="Transparency value"></span></div>
          <div class="row"><label for="width">Width:</label><span class="ctl spin"><input type="text" id="width" value="0.75 pt"></span></div>
          <div class="row"><label for="dash">Dash type:</label><span class="ctl combo line"><select id="dash"><option>00</option></select></span></div>
          <div class="row"><label for="cap">Cap type:</label><span class="ctl combo"><select id="cap"><option>Flat</option></select></span></div>
          <div class="row"><label for="round">Rounding presets:</label><span class="ctl combo round"><select id="round"><option></option></select></span></div>
          <div class="row"><label for="rsize">Rounding size:</label><span class="ctl spin"><input type="text" id="rsize" value="0.00 mm"></span></div>
          <div class="row"><label for="btype">Begin type:</label><span class="ctl combo line"><select id="btype"><option>00</option></select></span></div>
          <div class="row"><label for="bsize">Begin size:</label><span class="ctl combo"><select id="bsize"><option>Middle</option></select></span></div>
          <div class="row"><label for="etype">End type:</label><span class="ctl combo line"><select id="etype"><option>00</option></select></span></div>
          <div class="row"><label for="esize">End size:</label><span class="ctl combo"><select id="esize"><option>Middle</option></select></span></div>
        </form>
      </aside>
    </main>

    <footer class="status">
      <button class="view" aria-label="View"><svg width="22" height="12" viewBox="0 0 22 12"><path d="M5 1h12v10H5z" stroke-width="2"/><path d="M1 0v12M21 0v12"/></svg></button>
      <div class="pagesel"><select aria-label="Page"><option>Page-1</option></select></div>
      <button class="addpage" aria-label="Add page"><svg width="12" height="12" viewBox="0 0 12 12"><path d="M6 1v10M1 6h10" stroke-width="2"/></svg></button>
      <a href="#" class="pagetab">Page-1</a>
      <div class="info">
        <span class="shapeid">Shape ID: 1101</span>
        <button class="focus"><svg width="16" height="16" viewBox="0 0 16 16"><path d="M1 5V1h3M12 1h3v4M15 11v4h-3M4 15H1v-4" stroke-width="2"/><path class="lf" d="M5 4h4l2 2v6H5z"/></svg>Focus</button>
        <button aria-label="Play"><svg width="18" height="18" viewBox="0 0 18 18"><circle cx="9" cy="9" r="7.500" stroke-width="2"/><path class="lf" d="M7 5l5 4-5 4z"/></svg></button>
        <button class="minus" aria-label="Zoom out"><svg width="12" height="12" viewBox="0 0 12 12"><path d="M1 6h10" stroke-width="2"/></svg></button>
        <input type="range" class="zoom" value="23" aria-label="Zoom">
        <button class="more" aria-label="Zoom in"><svg width="12" height="12" viewBox="0 0 12 12"><path d="M6 1v10M1 6h10" stroke-width="2"/></svg></button>
        <button class="pct">100%<svg class="car" width="6" height="4"><use href="#down"/></svg></button>
        <button class="full" aria-label="Full screen"><svg width="16" height="16" viewBox="0 0 16 16"><path d="M2 6V2h4M10 2h4v4M14 10v4h-4M6 14H2v-4" stroke-width="2"/></svg></button>
        <button aria-label="Fit width"><svg width="16" height="16" viewBox="0 0 16 16"><path d="M1 1h14v14H1z" stroke-width="2"/><path d="M3 8h10M6 6L4 8l2 2M10 6l2 2-2 2"/></svg></button>
      </div>
    </footer>
  </div>

  <!-- tutorial marks -->
  <svg class="marks" width="1500" height="640" viewBox="0 0 1500 640">
    <rect x="6" y="63" width="110" height="33"/>
    <rect x="10" y="199" width="172" height="96"/>
    <rect x="297" y="208" width="23" height="22" stroke-width="3"/>
    <rect x="1128" y="404" width="358" height="219"/>
    <path d="M350 242L1142 542" stroke-width="7" stroke-linecap="round"/>
    <path d="M330 233L362 232L353 256z" class="head"/>
  </svg>

  <script src="script.js"></script>
</body>
</html>
```
FILE: styles.css
```css
* {
  box-sizing: border-box;
}

body {
  margin: 0;
  font-family: 'Segoe UI', 'Open Sans', sans-serif;
  font-size: 12px;
  line-height: 15px;
  color: #222;
  background: #f5f5f5;
  overflow: hidden;
}

button, input, select {
  font: inherit;
  color: inherit;
  background: none;
  border: 0;
  padding: 0;
  margin: 0;
  outline: none;
}

a {
  color: inherit;
  text-decoration: none;
}

svg {
  fill: none;
  stroke: #444;
  flex-shrink: 0;
}

svg text {
  stroke: none;
}

svg .f, svg use[href="#down"] {
  fill: #444;
  stroke: none;
}

svg .lt {
  stroke: #888;
}

svg .lf {
  fill: #777;
  stroke: none;
}

.plants {
  stroke: none;
}

.defs {
  position: absolute;
}

.app {
  height: 100vh;
  display: flex;
  flex-direction: column;
}

/* blue header */
.top {
  background: #0977ed;
  color: #fff;
  border-bottom: 1px solid #d0d0d0;
}

.top svg {
  stroke: #fff;
}

.top svg use[href="#down"] {
  fill: #fff;
}

.titlebar {
  height: 30px;
  display: flex;
  align-items: center;
  padding-right: 14px;
}

.top .logo {
  width: 24px;
  height: 24px;
  margin: 0 4px 2px 2px;
  stroke: none;
}

.quick {
  display: flex;
  align-items: center;
  gap: 14px;
  margin-left: 12px;
}

.q, .win, .help, .fold {
  display: flex;
}

.q svg {
  opacity: .85;
}

.window {
  margin-left: auto;
  display: flex;
  align-items: center;
}

.signin {
  width: 73px;
  height: 22px;
  border-radius: 11px;
  background: linear-gradient(90deg, #a3ccf9, #7fb6f6);
  color: #0977ed;
  font-weight: 600;
  display: flex;
  align-items: center;
  justify-content: center;
  gap: 5px;
}

.signin svg {
  fill: #0977ed;
  stroke: none;
}

.vbar {
  width: 2px;
  height: 12px;
  background: #84bbf6;
  margin: 0 12px 0 24px;
}

.win {
  margin-left: 25px;
}

.menubar {
  height: 28px;
  display: flex;
  padding-right: 13px;
}

.tabs {
  display: flex;
  padding-left: 1px;
}

.tabs a {
  padding: 0 26px;
  line-height: 30px;
}

.tabs .on {
  background: #f5f5f5;
  color: #222;
  border-radius: 3px 3px 0 0;
  height: 29px;
}

.links {
  margin-left: auto;
  display: flex;
  align-items: center;
  height: 24px;
}

.links a {
  display: flex;
  align-items: center;
  gap: 4px;
  margin-right: 12px;
}

.vbar.low {
  margin: 4px 16px 0 0;
}

.top .dot {
  fill: #ff4040;
  stroke: none;
}

.help {
  margin-right: 12px;
}

/* ribbon */
.ribbon {
  height: 75px;
  display: flex;
  border-bottom: 1px solid #d2d2d2;
  flex-shrink: 0;
}

.ribbon > div + div {
  position: relative;
}

.ribbon > div + div::before {
  content: "";
  position: absolute;
  left: 0;
  top: 12px;
  height: 51px;
  border-left: 1px solid #c8c8c8;
}

.libs {
  width: 154px;
  padding: 7px 0 0 14px;
}

.libs button {
  display: flex;
  align-items: center;
  gap: 8px;
  height: 32px;
  white-space: nowrap;
}

.libs .car {
  margin-left: -7px;
}

.tools {
  display: flex;
  align-items: flex-start;
  padding: 16px 7px 0 10px;
}

.tools button {
  padding: 0 7px;
  position: relative;
  text-align: center;
}

.tools button > svg:first-child {
  display: block;
  width: 20px;
  height: 20px;
  margin: 0 auto;
  stroke-width: 1.5;
}

.tools .one > svg:first-child {
  margin-bottom: 7px;
}

.tools .sel {
  margin-right: 6px;
}

.tools .sel .car {
  position: absolute;
  left: 50%;
  bottom: -6px;
  margin-left: -2px;
}

.tools .drop {
  margin-right: 12px;
}

.tools .drop .car {
  position: absolute;
  right: -4px;
  bottom: 5px;
}

.tools.last {
  padding-left: 13px;
}

.tools.last button {
  padding: 0 6px;
}

.shapes {
  width: 161px;
  padding: 7px 0 0 6px;
  display: grid;
  grid-template-columns: repeat(4, 37px);
  grid-auto-rows: 32px;
}

.shapes button {
  display: flex;
  align-items: center;
  justify-content: center;
}

.shapes svg {
  width: 16px;
  height: 16px;
  stroke-width: 2;
}

.bool {
  padding: 7px 13px 0 14px;
  display: grid;
  grid-template-columns: 87px 85px 68px;
  grid-auto-rows: 32px;
}

.bool button {
  display: flex;
  align-items: center;
  gap: 9px;
  color: #bdbdbd;
}

.bool svg {
  width: 14px;
  height: 14px;
  stroke: #8c8c8c;
  stroke-width: 2;
}

.bool svg .f {
  fill: #8c8c8c;
}

/* work area */
.work {
  flex: 1;
  min-height: 0;
  display: flex;
}

.left {
  width: 350px;
  border-right: 1px solid #cfcfcf;
  display: flex;
  flex-direction: column;
  flex-shrink: 0;
}

.lefthead {
  display: flex;
  justify-content: space-between;
  align-items: center;
  height: 26px;
  padding: 0 11px 0 5px;
}

.lefthead svg, .updown svg {
  stroke: #777;
}

.searchrow {
  display: flex;
  align-items: center;
  height: 36px;
  padding: 0 7px 0 11px;
}

.libmenu {
  display: flex;
  width: 26px;
}

.searchbox {
  flex: 1;
  height: 28px;
  display: flex;
  align-items: center;
  border: 1px solid #dcdcdc;
  border-radius: 2px;
  padding: 0 5px 0 7px;
}

.searchbox input {
  flex: 1;
}

.searchbox input::placeholder {
  color: #707070;
}

.searchbox svg {
  stroke-width: 2;
}

.updown {
  width: 19px;
  margin-left: 5px;
  display: flex;
  flex-direction: column;
  gap: 4px;
}

.updown button {
  height: 12px;
  border: 1px solid #d6d6d6;
  border-radius: 2px;
  display: flex;
  align-items: center;
  justify-content: center;
}

.scroller {
  flex: 1;
  min-height: 0;
  margin-top: 5px;
  display: flex;
  overflow: hidden;
}

.list {
  flex: 1;
  overflow: hidden;
}

.vtrack {
  width: 8px;
  margin-right: 2px;
  background: #ebebeb;
}

.vtrack i {
  display: block;
  height: 55%;
  background: #d6d6d6;
  border-radius: 4px;
}

.list h2 {
  margin: 0;
  height: 35px;
  padding: 0 7px 0 11px;
  background: #dfdfdf;
  font-size: 12px;
  font-weight: normal;
  color: #000;
  display: flex;
  align-items: center;
}

.list h2 i {
  border: 4px solid transparent;
  border-top: 6px solid #6e6e6e;
  border-bottom: 0;
  margin-right: 6px;
}

.list h2 button {
  display: flex;
}

.list h2 .x {
  margin-left: auto;
}

.list h2 .x svg {
  stroke: #666;
}

.list h2 .imp {
  margin-left: auto;
}

.list h2 .plus {
  margin: 0 10px 0 8px;
}

.list h2 .plus svg {
  stroke: #222;
}

.list h2 .plus + .x {
  margin-left: 0;
}

.grid {
  display: grid;
  grid-template-columns: repeat(auto-fill, 49px);
  grid-auto-rows: 49px;
  padding-top: 5px;
}

.mini {
  stroke: #222;
  stroke-width: 20px;
  fill: #fff;
}

/* thumbnails are drawn three units to the pixel */
.c3 svg {
  width: 49px;
  height: 49px;
  stroke: #444;
  stroke-width: 3;
}

.c3 .w {
  stroke: #7f7f7f;
  fill: #f5f5f5;
}

.c3 .g {
  stroke: #d0d0d0;
  stroke-width: 2;
}

.c3 text {
  font-family: 'Liberation Mono', monospace;
  font-size: 13px;
  fill: #888;
}

.c3 .t, .c3 .s, .c3 .l, .c3 .d {
  font-family: 'Liberation Sans', sans-serif;
}

.c3 .t {
  font-size: 8px;
}

.c3 .s {
  font-size: 11px;
}

.c3 .l {
  font-size: 16px;
}

.c3 .d {
  fill: #333;
  font-size: 11px;
  font-weight: bold;
}

.c3 .b {
  fill: #333;
}

.c3 .m {
  stroke: #666;
  stroke-width: 2;
}

.c3 .r {
  fill: url(#red);
  stroke: #c75252;
}

.c3 .n {
  fill: url(#green);
  stroke: #92d45c;
}

.c3 .y {
  fill: url(#grey);
  stroke: #888;
}

.c3 circle.y {
  fill: #f0f0f0;
}

.doors svg {
  stroke: #666;
}

.equip svg {
  stroke: #555;
  stroke-width: 2;
}

/* document */
.center {
  flex: 1;
  min-width: 0;
  display: flex;
  flex-direction: column;
}

.doctabs {
  height: 25px;
  display: flex;
  border-bottom: 1px solid #d6d6d6;
  flex-shrink: 0;
}

.doc {
  width: 160px;
  display: flex;
  align-items: center;
  padding: 0 11px 0 12px;
  gap: 9px;
  background: #c3c3c3;
  color: #0d7ff5;
}

.doc svg {
  stroke: none;
}

.doc i {
  width: 6px;
  height: 6px;
  border-radius: 50%;
  background: #ff4040;
  margin-left: auto;
}

.doctabs button {
  display: flex;
  align-items: center;
  padding-left: 5px;
}

.doctabs button svg {
  stroke-width: 2;
}

.stage {
  flex: 1;
  min-height: 0;
  display: grid;
  grid-template-columns: 18px 1fr 12px;
  grid-template-rows: 17px 1fr;
}

.corner {
  background: #f0f0f0;
}

.hruler, .vruler {
  width: 100%;
  height: 100%;
  overflow: hidden;
  background: #fafafa;
}

.hruler {
  border-bottom: 1px solid #d6d6d6;
}

.vruler {
  border-right: 1px solid #d6d6d6;
}

.hruler path, .vruler path {
  stroke: #d0d0d0;
}

.hruler text, .vruler text {
  font-size: 9px;
  fill: #666;
}

.canvas {
  background: #e4e4e4;
  overflow: hidden;
  position: relative;
}

.page {
  position: absolute;
  left: 44px;
  top: 67px;
  background: #fff;
  outline: 1px solid #a9a9a9;
  outline-offset: -1px;
}

.ink {
  stroke: #2d2d2d;
  stroke-width: 3;
}

.pick {
  stroke: #0d85f5;
}

.dims {
  font-family: 'Liberation Sans', sans-serif;
  font-size: 11px;
  fill: #111;
  text-anchor: middle;
}

.vbarscroll {
  border-left: 1px solid #dcdcdc;
}

.vbarscroll i {
  display: block;
  width: 10px;
  height: 67%;
  margin-top: 140px;
  border-radius: 5px;
  background: #bdbdbd;
}

.hscroll {
  height: 13px;
  padding-top: 1px;
  border-top: 1px solid #dcdcdc;
}

.hscroll i {
  display: block;
  height: 10px;
  width: 47%;
  margin-left: 317px;
  border-radius: 5px;
  background: #bdbdbd;
}

.palette {
  height: 17px;
  display: flex;
  border-top: 1px solid #dcdcdc;
}

.palette button {
  width: 33px;
  padding-left: 10px;
  display: flex;
}

.swatches {
  flex: 1;
  display: flex;
  gap: 1px;
  padding: 1px 0;
}

.swatches i {
  flex: 1;
}

/* icon strip */
.strip {
  width: 37px;
  border: 1px solid #cfcfcf;
  border-width: 0 1px;
  display: flex;
  flex-direction: column;
  gap: 10px;
}

.strip button {
  height: 35px;
  display: flex;
  align-items: center;
  justify-content: center;
}

.strip svg {
  width: 18px;
  height: 18px;
  stroke-width: 2;
}

.strip .first {
  height: 31px;
  margin-bottom: -10px;
}

.strip .first svg {
  stroke: #888;
  stroke-width: 1;
}

.strip .on {
  background: #007fff;
}

.strip .on svg {
  stroke: #fff;
}

.strip .on .f {
  fill: #fff;
}

/* format pane */
.pane {
  width: 282px;
  color: #000;
}

.panetabs {
  display: flex;
  height: 31px;
}

.panetabs button {
  flex: 1;
  background: #dcdcdc;
  padding-top: 3px;
}

.panetabs .l {
  border-radius: 0 0 5px 0;
}

.panetabs .r {
  border-radius: 0 0 0 5px;
}

.panetabs .on {
  background: none;
  font-weight: bold;
  padding-top: 0;
}

.pane form {
  padding: 7px 20px 0;
}

.radio {
  display: flex;
  align-items: center;
  gap: 5px;
  height: 35px;
}

.radio input {
  appearance: none;
  width: 13px;
  height: 13px;
  border: 1px solid #c4c4c4;
  border-radius: 50%;
  background: #fff;
}

.radio input:checked {
  border-color: #2f8cf0;
  background: radial-gradient(circle, #0977ed 3px, #fff 4px);
}

.row {
  display: flex;
  align-items: center;
  justify-content: space-between;
  height: 34px;
}

.row.first {
  margin-top: 8px;
}

.row.slide {
  height: 30px;
  padding-bottom: 4px;
}

.ctl {
  position: relative;
  width: 100px;
  height: 24px;
  background: #fff;
  border: 1px solid #dcdcdc;
  border-radius: 2px;
}

.ctl.small {
  width: 60px;
}

.ctl input, .ctl select {
  appearance: none;
  width: 100%;
  height: 22px;
  padding: 0 20px 0 7px;
}

.ctl.small input {
  padding-right: 14px;
}

.ctl select {
  padding-left: 5px;
}

.combo::after, .spin::before, .spin::after {
  content: "";
  position: absolute;
  right: 5px;
  border: 3px solid transparent;
}

.combo::after {
  top: 8px;
  border-top: 4px solid #777;
  border-bottom: 0;
}

.spin::before {
  top: 4px;
  border-bottom: 4px solid #777;
  border-top: 0;
}

.spin::after {
  bottom: 4px;
  border-top: 4px solid #777;
  border-bottom: 0;
}

.color {
  padding: 3px 4px;
  border-color: #cfcfcf;
}

.color i {
  display: block;
  height: 16px;
  background: #333;
}

.ctl.line select {
  padding-left: 69px;
  padding-right: 0;
  color: #5c6270;
  background: linear-gradient(#444, #444) 6px 11px / 55px 1px no-repeat;
}

.round::before {
  content: "";
  position: absolute;
  left: 20px;
  top: 2px;
  width: 31px;
  height: 18px;
  border: 1px solid #333;
  border-width: 1px 1px 0 0;
}

input[type="range"] {
  appearance: none;
  width: 142px;
  height: 12px;
  cursor: pointer;
}

input[type="range"]::-webkit-slider-runnable-track {
  height: 4px;
  border-radius: 2px;
  background: #d2d2d2;
}

input[type="range"]::-webkit-slider-thumb {
  appearance: none;
  width: 12px;
  height: 12px;
  margin-top: -4px;
  border-radius: 50%;
  border: 2px solid #4b9ef2;
  background: #fff;
}

input.shade::-webkit-slider-runnable-track {
  background: linear-gradient(90deg, #007fff 10px, #d2d2d2 10px);
}

input.zoom {
  width: 82px;
}

input.zoom::-webkit-slider-runnable-track {
  background: linear-gradient(90deg, #bdbdbd 20px, #dedede 20px);
}

input.zoom::-webkit-slider-thumb {
  border-color: #b5b5b5;
}

/* status bar */
.status {
  height: 31px;
  display: flex;
  align-items: stretch;
  border-top: 1px solid #dcdcdc;
  flex-shrink: 0;
  padding-top: 3px;
  color: #000;
}

.status button {
  display: flex;
  align-items: center;
}

.status .view, .status .addpage {
  width: 45px;
  justify-content: center;
  border-right: 1px solid #cfcfcf;
}

.pagesel {
  width: 119px;
  position: relative;
  border-right: 1px solid #cfcfcf;
}

.pagesel select {
  appearance: none;
  width: 100%;
  height: 100%;
  padding-left: 10px;
}

.pagesel::after {
  content: "";
  position: absolute;
  right: 6px;
  top: 10px;
  border: 3px solid transparent;
  border-top: 4px solid #777;
  border-bottom: 0;
}

.pagetab {
  width: 80px;
  line-height: 28px;
  text-align: center;
  font-weight: 600;
  color: #0d7ff5;
  border-right: 1px solid #cfcfcf;
}

.info {
  margin-left: auto;
  display: flex;
  align-items: center;
  padding-right: 29px;
}

.focus {
  gap: 8px;
  margin: 0 15px 0 25px;
}

.minus {
  margin: 0 6px 0 9px;
}

.more {
  margin: 0 11px 0 6px;
}

.pct {
  gap: 4px;
}

.full {
  margin: 0 7px 0 17px;
}

.marks {
  position: absolute;
  left: 0;
  top: 0;
  pointer-events: none;
  stroke: #ed1c24;
  stroke-width: 4;
  stroke-linejoin: round;
}

.marks .head {
  fill: #ed1c24;
  stroke: none;
}
```
FILE: script.js
```js
// rulers: 10 mm steps, zero sits on the page corner
const STEP = 37.8;

function ruler(id, zero, size, vertical) {
  let ticks = '';
  let labels = '';
  for (let i = vertical ? -2 : -1; zero + i * STEP < size; i++) {
    const p = Math.round(zero + i * STEP) + 0.5;
    const h = Math.round(zero + (i + 0.5) * STEP) + 0.5;
    const len = String(i * 10).length * 5;
    if (vertical) {
      ticks += `M0 ${p}H18M11 ${h}H18`;
      if (p + len + 5 < size) {
        labels += `<text transform="translate(10 ${p + 2 + len}) rotate(-90)">${i * 10}</text>`;
      }
    } else {
      ticks += `M${p} 0V17M${h} 10V17`;
      if (p + len + 5 < size) {
        labels += `<text x="${p + 2}" y="9">${i * 10}</text>`;
      }
    }
  }
  document.getElementById(id).innerHTML = `<path d="${ticks}"/>${labels}`;
}

const hr = document.getElementById('hruler');
const vr = document.getElementById('vruler');
ruler('hruler', 44, hr.clientWidth, false);
ruler('vruler', 66, vr.clientHeight, true);

// colour palette
const colors = [
  '#b01020', '#cb0d32', '#e8435f', '#f56380', '#f89bae', '#2a7f92', '#3ba6c0', '#41c0dd', '#61daf0', '#a5effd',
  '#f35226', '#ff7f38', '#ff971a', '#ffb617', '#ffc45f', '#149579', '#19b699', '#1dcbb0', '#66d9c8', '#86eedd',
  '#9a2c5e', '#c74e8b', '#e667a6', '#fa87c4', '#f1c1dc', '#5f8a14', '#77a02a', '#9abe24', '#b2d24a', '#d2e18c',
  '#2026ae', '#3340dc', '#6e43f2', '#906cf8', '#ad91fa', '#fbca05', '#fbdc2c', '#efe92b', '#fbf54a', '#fcfd80',
  '#9a4fdb', '#c450e4', '#d56df8', '#bd82fc', '#dca2fd', '#2f8043', '#3ca259', '#4eb074', '#65bd89', '#92d8ab',
  '#e9382c', '#ff4b3e', '#ff6364', '#ff7b7b', '#ff918b', '#2443a0', '#2e55cf', '#366bf5', '#608cff', '#88aef6',
  '#752c00', '#983a02', '#a94027', '#d15d3e', '#e37556', '#198adb', '#2b9bf5', '#44b3ff', '#3ccfff', '#6ae3ff',
  '#795038', '#965e43', '#b57150', '#d98660', '#f6996e', '#8b8277', '#b3ad9b', '#cdc9b6', '#e5dccd', '#f3edd8',
  '#1a1a1a', '#2f2f2f', '#444444', '#5b5b5b', '#7d7d7d', '#bababa', '#cacaca', '#d8d8d8', '#e6e6e6', '#f2f2f2', '#ffffff'
];
document.getElementById('swatches').innerHTML = colors.map(c => `<i style="background:${c}"></i>`).join('');
```
